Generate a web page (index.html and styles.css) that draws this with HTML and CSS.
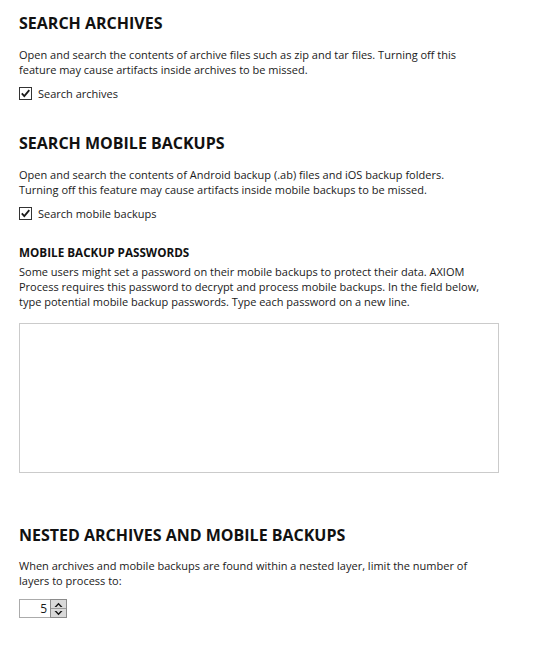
FILE: index.html
```html
<!DOCTYPE html>
<html>
<head>
<meta charset="utf-8">
<link rel="stylesheet" href="styles.css">
</head>
<body>
<div class="page">
  <section class="sec sec-first">
    <h2 class="title">SEARCH ARCHIVES</h2>
    <p class="desc">Open and search the contents of archive files such as zip and tar files. Turning off this feature may cause artifacts inside archives to be missed.</p>
    <label class="check">
      <span class="box"><svg viewBox="0 0 11 11" width="11" height="11"><path d="M1.8 5.4 L4.3 8.2 L9.3 2.2" fill="none" stroke="#1a1a1a" stroke-width="1.8"/></svg></span>
      <span>Search archives</span>
    </label>
  </section>

  <section class="sec sec-mobile">
    <h2 class="title">SEARCH MOBILE BACKUPS</h2>
    <p class="desc">Open and search the contents of Android backup (.ab) files and iOS backup folders.<br>Turning off this feature may cause artifacts inside mobile backups to be missed.</p>
    <label class="check">
      <span class="box"><svg viewBox="0 0 11 11" width="11" height="11"><path d="M1.8 5.4 L4.3 8.2 L9.3 2.2" fill="none" stroke="#1a1a1a" stroke-width="1.8"/></svg></span>
      <span>Search mobile backups</span>
    </label>
    <h3 class="subtitle">MOBILE BACKUP PASSWORDS</h3>
    <p class="desc desc-sub">Some users might set a password on their mobile backups to protect their data. AXIOM Process requires this password to decrypt and process mobile backups. In the field below, type potential mobile backup passwords. Type each password on a new line.</p>
    <div class="textarea"></div>
  </section>

  <section class="sec sec-nested">
    <h2 class="title">NESTED ARCHIVES AND MOBILE BACKUPS</h2>
    <p class="desc desc-nested">When archives and mobile backups are found within a nested layer, limit the number of layers to process to:</p>
    <div class="spinner">
      <div class="spin-value">5</div>
      <div class="spin-buttons">
        <div class="spin-btn"><svg viewBox="0 0 9 5" width="9" height="5"><path d="M0.5 5 L4.5 0.8 L8.5 5 L6.6 5 L4.5 2.8 L2.4 5 Z" fill="#111"/></svg></div>
        <div class="spin-btn"><svg viewBox="0 0 9 5" width="9" height="5"><path d="M0.5 0 L4.5 4.2 L8.5 0 L6.6 0 L4.5 2.2 L2.4 0 Z" fill="#111"/></svg></div>
      </div>
    </div>
  </section>
</div>
</body>
</html>
```
FILE: styles.css
```css
html, body {
  margin: 0;
  padding: 0;
  background: #ffffff;
}
body {
  font-family: "Open Sans", "Noto Sans", "Liberation Sans", sans-serif;
  color: #1a1a1a;
  font-size: 11px;
}
.page {
  padding: 12px 19px 0 19px;
}
.sec {
  display: flex;
  flex-direction: column;
  align-items: flex-start;
}
.sec-mobile {
  margin-top: 31px;
}
.sec-nested {
  margin-top: 51px;
}
.title {
  font-size: 16px;
  font-weight: 700;
  margin: 0;
  line-height: 22px;
  color: #111;
}
.desc {
  margin: 13px 0 0 0;
  line-height: 15px;
  font-size: 11px;
  width: 475px;
}
.sec-mobile .desc {
  margin-top: 13px;
}
.sec-mobile .desc-sub {
  margin-top: 4px;
}
.desc-nested {
  margin-top: 12px;
}
.check {
  display: flex;
  align-items: center;
  gap: 6px;
  margin-top: 9px;
  line-height: 15px;
  font-size: 11px;
}
.box {
  width: 11px;
  height: 11px;
  border: 1px solid #333;
  display: flex;
  align-items: center;
  justify-content: center;
  overflow: hidden;
  background: #fff;
}
.subtitle {
  font-size: 11.7px;
  font-weight: 700;
  margin: 23px 0 0 0;
  line-height: 16px;
  color: #111;
}
.textarea {
  margin-top: 14px;
  width: 478px;
  height: 148px;
  border: 1px solid #cbcbcb;
}
.spinner {
  margin-top: 11px;
  display: flex;
  height: 19px;
}
.spin-value {
  width: 27px;
  height: 17px;
  border: 1px solid #ababab;
  border-right: none;
  text-align: right;
  padding-right: 3px;
  line-height: 17px;
  font-size: 12px;
}
.spin-buttons {
  display: flex;
  flex-direction: column;
  width: 17px;
  height: 19px;
  border: 1px solid #8a8a8a;
  box-sizing: border-box;
  background: #d9d9d9;
}
.spin-btn {
  flex: 1;
  display: flex;
  align-items: center;
  justify-content: center;
}
.spin-btn + .spin-btn {
  border-top: 1px solid #9a9a9a;
}
```
